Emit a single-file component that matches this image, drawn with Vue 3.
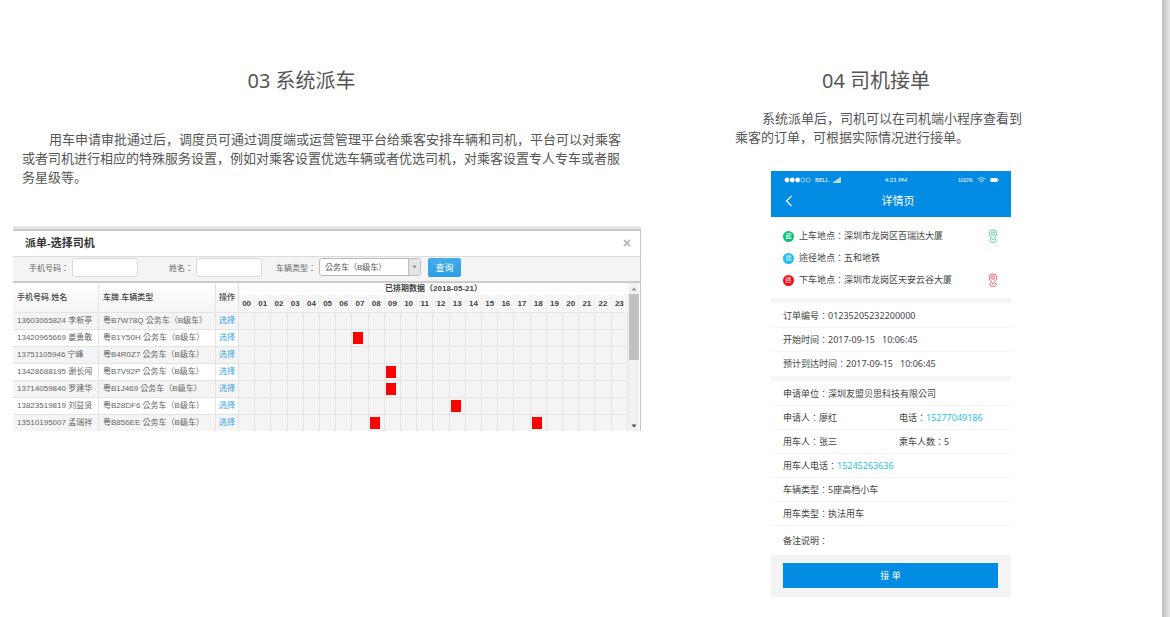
<script setup>
import { ref } from 'vue'

const hours = Array.from({ length: 24 }, (_, i) => String(i).padStart(2, '0'))

const drivers = [
  { phone: '13603065824', name: '李新亭', car: '粤B7W78Q 公务车（B级车）', busy: [] },
  { phone: '13420965669', name: '姜勇敢', car: '粤B1Y50H 公务车（B级车）', busy: ['07'] },
  { phone: '13751105946', name: '宁峰', car: '粤B4R0Z7 公务车（B级车）', busy: [] },
  { phone: '13428688195', name: '谢长闯', car: '粤B7V92P 公务车（B级车）', busy: ['09'] },
  { phone: '13714059840', name: '罗建华', car: '粤B1J469 公务车（B级车）', busy: ['09'] },
  { phone: '13823519819', name: '刘益贤', car: '粤B28DF6 公务车（B级车）', busy: ['13'] },
  { phone: '13510195007', name: '孟瑞祥', car: '粤B856EE 公务车（B级车）', busy: ['08', '18'] },
]

const stops = [
  { mark: '起', kind: 'start', label: '上车地点', place: '深圳市龙岗区百瑞达大厦', pin: true },
  { mark: '途', kind: 'via', label: '途径地点', place: '五和地铁', pin: false },
  { mark: '终', kind: 'end', label: '下车地点', place: '深圳市龙岗区天安云谷大厦', pin: true },
]

const phone = ref('')
const name = ref('')
const carType = ref('b')
</script>

<template>
  <div class="page">
    <main class="content">
      <section class="dispatch">
        <h2>03 系统派车</h2>
        <p>
          用车申请审批通过后，调度员可通过调度端或运营管理平台给乘客安排车辆和司机，平台可以对乘客<br />或者司机进行相应的特殊服务设置，例如对乘客设置优选车辆或者优选司机，对乘客设置专人专车或者服<br />务星级等。
        </p>

        <div class="dialog">
          <header class="dialog-head">
            <h3>派单-选择司机</h3>
            <button class="close" type="button" aria-label="关闭">
              <svg viewBox="0 0 8 8" width="8" height="8"><path d="M1 1L7 7M7 1L1 7" stroke="#bdbdbd" stroke-width="2" /></svg>
            </button>
          </header>
          <form class="filters" @submit.prevent>
            <label class="f-phone" for="phone">手机号码：</label>
            <input id="phone" v-model="phone" type="text" />
            <label class="f-name" for="name">姓名：</label>
            <input id="name" v-model="name" type="text" />
            <label class="f-type" for="type">车辆类型：</label>
            <div class="select">
              <select id="type" v-model="carType">
                <option value="b">公务车（B级车）</option>
              </select>
              <span class="arrow"><svg viewBox="0 0 5 4" width="5" height="4"><path d="M0.5 0.5H4.5L2.5 3.5Z" fill="#888" /></svg></span>
            </div>
            <button class="query" type="submit">查询</button>
          </form>
          <div class="grid-wrap">
            <div class="grid-view">
              <table>
                <colgroup>
                  <col class="c-driver" />
                  <col class="c-car" />
                  <col class="c-op" />
                  <col v-for="h in hours" :key="h" />
                </colgroup>
                <thead>
                  <tr>
                    <th class="left" rowspan="2">手机号码.姓名</th>
                    <th class="left" rowspan="2">车牌.车辆类型</th>
                    <th class="op" rowspan="2">操作</th>
                    <th class="range" colspan="24">已排期数据（2018-05-21）</th>
                  </tr>
                  <tr>
                    <th v-for="h in hours" :key="h" class="hour">{{ h }}</th>
                  </tr>
                </thead>
                <tbody>
                  <tr v-for="d in drivers" :key="d.phone">
                    <td class="left">{{ d.phone }} {{ d.name }}</td>
                    <td class="left">{{ d.car }}</td>
                    <td class="op"><a href="#">选择</a></td>
                    <td v-for="h in hours" :key="h" class="slot"><span v-if="d.busy.includes(h)" class="busy"></span></td>
                  </tr>
                </tbody>
              </table>
            </div>
            <div class="scrollbar">
              <svg viewBox="0 0 6 4" width="6" height="4"><path d="M0.5 3.5H5.5L3 0.5Z" fill="#999" /></svg>
              <span class="thumb"></span>
              <svg class="down" viewBox="0 0 6 4" width="6" height="4"><path d="M0.5 0.5H5.5L3 3.5Z" fill="#444" /></svg>
            </div>
          </div>
        </div>
      </section>

      <section class="accept">
        <h2>04 司机接单</h2>
        <p>系统派单后，司机可以在司机端小程序查看到<br />乘客的订单，可根据实际情况进行接单。</p>

        <div class="phone">
          <header class="app-head">
            <div class="status">
              <span class="carrier">
                <svg viewBox="0 0 27 6" width="27" height="6">
                  <g fill="#fff"><circle cx="3" cy="3" r="2.4" /><circle cx="8.3" cy="3" r="2.4" /><circle cx="13.6" cy="3" r="2.4" /></g>
                  <g fill="none" stroke="#cfe6f8" stroke-width="0.7"><circle cx="19" cy="3" r="2.1" /><circle cx="24.3" cy="3" r="2.1" /></g>
                </svg>
                <span>BELL</span>
                <svg viewBox="0 0 8 6" width="8" height="6"><path d="M0.3 6V4.5H2.1V6ZM2.3 6V3.3H4.1V6ZM4.3 6V1.8H6V6ZM6.2 6V0.3H7.8V6Z" fill="#d6eafa" /></svg>
              </span>
              <span class="clock">4:21 PM</span>
              <span class="power">
                <span>100%</span>
                <svg viewBox="0 0 9 6" width="9" height="6"><g fill="none" stroke="#c8e3f8" stroke-width="0.9"><path d="M0.5 2Q4.5 -1 8.5 2M2 3.6Q4.5 1.6 7 3.6" /></g><path d="M3.2 4.6Q4.5 3.7 5.8 4.6L4.5 5.9Z" fill="#c8e3f8" /></svg>
                <svg viewBox="0 0 9 6" width="9" height="6"><rect x="0.5" y="1" width="7" height="4" rx="0.6" fill="#fff" /><path d="M8 2.3H8.7V3.7H8Z" fill="#fff" /></svg>
              </span>
            </div>
            <div class="nav">
              <button type="button" aria-label="返回">
                <svg viewBox="0 0 8 12" width="8" height="12"><path d="M6.5 1L1.5 6L6.5 11" fill="none" stroke="#fff" stroke-width="1.1" /></svg>
              </button>
              <h3>详情页</h3>
            </div>
          </header>

          <ul class="stops">
            <li v-for="s in stops" :key="s.kind">
              <span class="mark" :class="s.kind">{{ s.mark }}</span>
              <span>{{ s.label }}：{{ s.place }}</span>
              <svg v-if="s.pin" class="pin" :class="s.kind" viewBox="0 0 10 14" width="10" height="14">
                <g fill="none" stroke="currentColor" stroke-width="0.8">
                  <path d="M5 10.8C2.6 8.3 1.3 6.3 1.3 4.6A3.7 3.7 0 0 1 8.7 4.6C8.7 6.3 7.4 8.3 5 10.8Z" />
                  <circle cx="5" cy="4.6" r="1.6" />
                  <path d="M3 10.2C0.8 10.8 1 13.2 5 13.2S9.2 10.8 7 10.2" />
                </g>
              </svg>
            </li>
          </ul>

          <div class="group">
            <div class="row">订单编号：01235205232200000</div>
            <div class="row">开始时间：2017-09-15&nbsp;&nbsp; 10:06:45</div>
            <div class="row">预计到达时间：2017-09-15&nbsp;&nbsp; 10:06:45</div>
          </div>

          <div class="group">
            <div class="row">申请单位：深圳友盟贝思科技有限公司</div>
            <div class="row two"><span>申请人：廖红</span><span>电话：<a href="tel:15277049186">15277049186</a></span></div>
            <div class="row two"><span>用车人：张三</span><span>乘车人数：5</span></div>
            <div class="row"><span>用车人电话：<a href="tel:15245263636">15245263636</a></span></div>
            <div class="row">车辆类型：5座高档小车</div>
            <div class="row">用车类型：执法用车</div>
            <div class="row last">备注说明：</div>
          </div>

          <footer class="app-foot"><button type="button">接 单</button></footer>
        </div>
      </section>
    </main>
    <div class="edge"></div>
  </div>
</template>

<style>
body {
  margin: 0;
  background: #fff;
}
</style>

<style scoped>
.page {
  display: flex;
  min-height: 100vh;
  font-family: "Noto Sans", "Noto Sans CJK SC", sans-serif;
  color: #555;
}
.content {
  flex: 1;
  display: grid;
  grid-template-columns: 654fr 508fr;
  align-items: start;
}
.edge {
  width: 8px;
  background: linear-gradient(to right, #bfbfbf, #e6e6e6);
}
h2,
h3,
p,
ul {
  margin: 0;
  padding: 0;
  font-weight: 400;
}
button {
  padding: 0;
  border: 0;
  background: none;
  font-family: inherit;
}
svg {
  display: block;
}
a {
  text-decoration: none;
}
h2 {
  font-size: 20px;
  line-height: 28px;
  text-align: center;
}
p {
  font-size: 13px;
  line-height: 19px;
  text-indent: 27px;
  white-space: nowrap;
  font-family: "Noto Sans CJK SC", sans-serif;
}

/* Dispatch dialog */
.dispatch {
  padding: 67px 13px 0;
}
.dispatch h2 {
  margin-right: 51px;
}
.dispatch p {
  margin: 34px 0 40px 9px;
}
.dialog {
  border-top: 3px solid #e6e6e6;
  font-family: "Liberation Sans", "Noto Sans CJK TC", sans-serif;
  font-size: 8px;
  color: #666;
}
.dialog-head {
  display: flex;
  align-items: center;
  justify-content: space-between;
  box-sizing: border-box;
  height: 28px;
  padding: 0 9px 2px 12px;
  border-top: 2px solid #c9c9c9;
  border-right: 1px solid #c4c4c4;
  border-bottom: 1px solid #dcdcdc;
}
.dialog-head h3 {
  font-size: 11px;
  line-height: 16px;
  font-weight: 700;
  color: #333;
}
.filters {
  display: flex;
  align-items: center;
  height: 20px;
  padding: 0 0 4px 16px;
  border-right: 1px solid #c4c4c4;
  border-bottom: 2px solid #ccc;
  background: #f4f4f4;
}
.filters input {
  box-sizing: border-box;
  width: 66px;
  height: 19px;
  padding: 0 4px;
  border: 1px solid #d9d9d9;
  border-radius: 3px;
  background: #fff;
  font-size: 8px;
}
.f-phone {
  width: 43px;
}
.f-name {
  width: 27px;
  margin-left: 31px;
}
.f-type {
  width: 43px;
  margin-left: 14px;
}
.select {
  position: relative;
  width: 102px;
  height: 18px;
}
.select select {
  box-sizing: border-box;
  width: 100%;
  height: 100%;
  padding: 0 14px 0 5px;
  border: 1px solid #bbb;
  border-radius: 3px;
  background: #fff;
  appearance: none;
  font-family: inherit;
  font-size: 8px;
  color: #555;
}
.arrow {
  position: absolute;
  top: 1px;
  right: 1px;
  bottom: 1px;
  display: flex;
  align-items: center;
  justify-content: center;
  width: 11px;
  border-left: 1px solid #bbb;
  border-radius: 0 2px 2px 0;
  background: #e4e4e4;
  pointer-events: none;
}
.query {
  width: 33px;
  height: 19px;
  margin-left: 7px;
  border-radius: 2px;
  background: linear-gradient(#44adeb, #2c9de4);
  font-size: 9px;
  color: #fff;
}
.grid-wrap {
  display: flex;
  border-right: 1px solid #c4c4c4;
}
.grid-view {
  flex: 1;
  height: 148px;
  overflow: hidden;
}
table {
  width: 100%;
  table-layout: fixed;
  border-collapse: separate;
  border-spacing: 0;
  line-height: 12px;
}
.c-driver {
  width: 86px;
}
.c-car {
  width: 117px;
}
.c-op {
  width: 23px;
}
th,
td {
  box-sizing: border-box;
  padding: 0;
  border-right: 1px solid #e4e4e4;
  border-bottom: 1px solid #e4e4e4;
  white-space: nowrap;
  text-align: center;
}
td {
  height: 17px;
}
th {
  color: #444;
}
.left {
  padding-left: 4px;
  text-align: left;
}
th.left,
th.op {
  background: linear-gradient(#fff, #f4f4f4);
  font-weight: 500;
}
.range {
  height: 12px;
  border: 0;
  background: #fdfdfd;
  line-height: 10px;
}
.hour {
  height: 18px;
  border-right-color: #f0f0f0;
  background: #f6f6f6;
}
tbody tr:nth-child(odd) {
  background: #f4f4f4;
}
.slot {
  background: #f4f4f4;
}
.op a {
  color: #3ba3e8;
}
.busy {
  display: block;
  width: 10px;
  height: 12px;
  margin-left: 1px;
  background: #f00;
}
.scrollbar {
  display: flex;
  flex-direction: column;
  align-items: center;
  width: 11px;
  padding-top: 4px;
  margin-right: 1px;
  background: #f1f1f1;
}
.thumb {
  width: 10px;
  height: 66px;
  margin-top: 3px;
  background: #c1c1c1;
}
.down {
  margin: auto 0 3px;
}

/* Driver app */
.accept {
  padding: 67px 115px 0 81px;
}
.accept h2 {
  margin-right: 30px;
}
.accept p {
  margin: 13px 0 25px;
}
.phone {
  max-width: 240px;
  margin: 0 auto;
  background: #fff;
  font-family: "Noto Sans", "Noto Sans CJK TC", sans-serif;
  font-size: 9px;
  line-height: 12px;
  color: #444;
}
.app-head {
  height: 46px;
  background: #028be2;
  color: #fff;
}
.status {
  display: grid;
  grid-template-columns: 1fr auto 1fr;
  align-items: center;
  height: 18px;
  padding: 0 12px 0 13px;
  font-family: Lato, sans-serif;
  font-size: 6px;
  line-height: 8px;
}
.clock {
  padding-left: 9px;
}
.carrier,
.power {
  display: flex;
  align-items: center;
  gap: 4px;
}
.power {
  justify-content: flex-end;
}
.nav {
  position: relative;
  display: flex;
  align-items: center;
  justify-content: center;
  height: 24px;
  padding-left: 14px;
}
.nav button {
  position: absolute;
  left: 14px;
}
.nav h3 {
  font-size: 11px;
  line-height: 16px;
}
.stops {
  padding: 8px 13px 7px 12px;
  list-style: none;
}
.stops li {
  display: flex;
  align-items: center;
  gap: 5px;
  height: 22px;
}
.mark {
  width: 11px;
  height: 11px;
  border-radius: 50%;
  font-size: 6px;
  line-height: 11px;
  text-align: center;
  color: #fff;
}
.mark.start {
  background: #12bf78;
}
.mark.via {
  background: #1fbdf0;
}
.mark.end {
  background: #f0101c;
}
.pin {
  margin-left: auto;
}
.pin.start {
  color: #2bc184;
}
.pin.end {
  color: #f0303a;
}
.group {
  padding-top: 1px;
  border-top: 5px solid #f5f5f5;
}
.row {
  display: flex;
  align-items: center;
  box-sizing: border-box;
  height: 24px;
  padding-left: 12px;
  border-bottom: 1px solid #f4f4f4;
}
.group .row:last-child {
  border-bottom: 0;
}
.two {
  display: grid;
  grid-template-columns: 116px 1fr;
}
.row a {
  color: #2bbdea;
}
.last {
  height: 29px;
}
.app-foot {
  padding: 8px 13px 9px 12px;
  background: #f5f4f5;
}
.app-foot button {
  display: block;
  width: 100%;
  height: 25px;
  background: #028be2;
  font-size: 9px;
  color: #fff;
}
</style>
